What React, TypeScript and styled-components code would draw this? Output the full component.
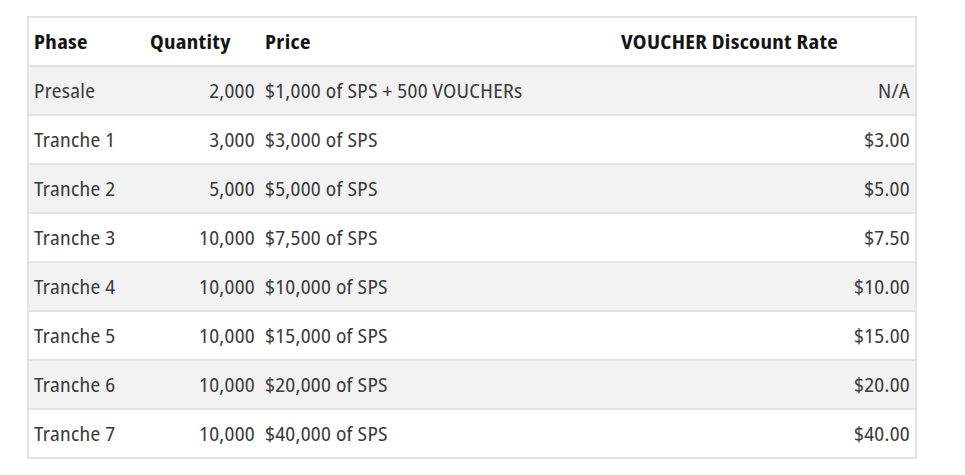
import React from 'react';
import styled, { createGlobalStyle } from 'styled-components';

const GlobalStyle = createGlobalStyle`
  body {
    margin: 0;
    background: #ffffff;
    font-family: "Noto Sans Display", "Open Sans", "Liberation Sans", sans-serif;
    font-stretch: condensed;
  }
`;

const Page = styled.div`
  padding: 16px 0 0 27px;
`;

const Table = styled.table`
  width: 890px;
  table-layout: fixed;
  border-collapse: collapse;
  border: 2px solid #e0e3e7;
  font-size: 20px;
  letter-spacing: 0.3px;
  color: #3b3b3b;
`;

const Row = styled.tr<{ $striped?: boolean }>`
  height: 49px;
  background: ${(p) => (p.$striped ? '#f2f2f2' : '#ffffff')};
  border-top: 2px solid #e0e3e7;
`;

const HeadCell = styled.th`
  padding: 0 5px;
  text-align: left;
  font-weight: 700;
  color: #151515;
  white-space: nowrap;
`;

const Cell = styled.td<{ $align?: 'left' | 'right' }>`
  padding: 0 5px;
  text-align: ${(p) => p.$align || 'left'};
  white-space: nowrap;
`;

const rows = [
  { phase: 'Presale', qty: '2,000', price: '$1,000 of SPS + 500 VOUCHERs', rate: 'N/A' },
  { phase: 'Tranche 1', qty: '3,000', price: '$3,000 of SPS', rate: '$3.00' },
  { phase: 'Tranche 2', qty: '5,000', price: '$5,000 of SPS', rate: '$5.00' },
  { phase: 'Tranche 3', qty: '10,000', price: '$7,500 of SPS', rate: '$7.50' },
  { phase: 'Tranche 4', qty: '10,000', price: '$10,000 of SPS', rate: '$10.00' },
  { phase: 'Tranche 5', qty: '10,000', price: '$15,000 of SPS', rate: '$15.00' },
  { phase: 'Tranche 6', qty: '10,000', price: '$20,000 of SPS', rate: '$20.00' },
  { phase: 'Tranche 7', qty: '10,000', price: '$40,000 of SPS', rate: '$40.00' },
];

const App = () => (
  <>
    <GlobalStyle />
    <Page>
      <Table>
        <colgroup>
          <col style={{ width: 117 }} />
          <col style={{ width: 115 }} />
          <col style={{ width: 356 }} />
          <col />
        </colgroup>
        <thead>
          <Row>
            <HeadCell>Phase</HeadCell>
            <HeadCell>Quantity</HeadCell>
            <HeadCell>Price</HeadCell>
            <HeadCell>VOUCHER Discount Rate</HeadCell>
          </Row>
        </thead>
        <tbody>
          {rows.map((r, i) => (
            <Row key={r.phase} $striped={i % 2 === 0}>
              <Cell>{r.phase}</Cell>
              <Cell $align="right">{r.qty}</Cell>
              <Cell>{r.price}</Cell>
              <Cell $align="right">{r.rate}</Cell>
            </Row>
          ))}
        </tbody>
      </Table>
    </Page>
  </>
);

export default App;
